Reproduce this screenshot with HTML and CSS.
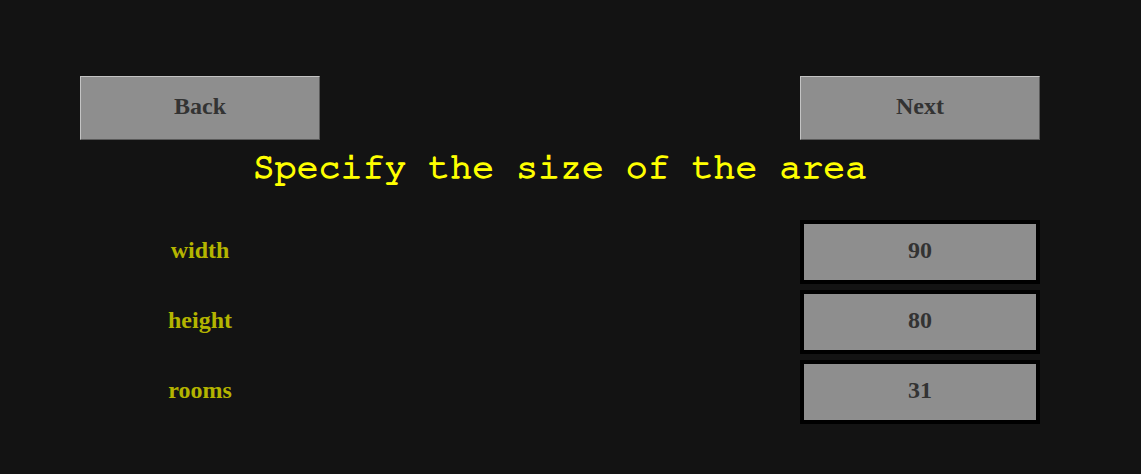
FILE: index.html
```html
<!DOCTYPE html>
<html>
<head>
<meta charset="utf-8">
<link rel="stylesheet" href="styles.css">
</head>
<body>
<div class="page">
  <div class="nav">
    <button class="btn">Back</button>
    <button class="btn">Next</button>
  </div>
  <h1 class="title">Specify the size of the area</h1>
  <div class="fields">
    <div class="row">
      <span class="label">width</span>
      <div class="value">90</div>
    </div>
    <div class="row">
      <span class="label">height</span>
      <div class="value">80</div>
    </div>
    <div class="row">
      <span class="label">rooms</span>
      <div class="value">31</div>
    </div>
  </div>
</div>
</body>
</html>
```

FILE: styles.css
```css
html, body {
  margin: 0;
  padding: 0;
  background: #131313;
}
.page {
  width: 960px;
  padding: 76px 0 0 80px;
}
.nav {
  display: flex;
  justify-content: space-between;
}
.btn {
  width: 240px;
  height: 64px;
  box-sizing: border-box;
  background: #8e8e8e;
  border: 1px solid;
  border-color: #c4c4c4 #5a5a5a #5a5a5a #c4c4c4;
  font-family: "Liberation Serif", serif;
  font-weight: bold;
  font-size: 24px;
  line-height: 24px;
  color: #333333;
  padding: 0 0 4px 0;
}
.title {
  margin: 0;
  height: 80px;
  box-sizing: border-box;
  padding-top: 9px;
  text-align: center;
  font-family: "Nimbus Mono PS", "Nimbus Mono L", "FreeMono", "Courier", "Liberation Mono", monospace;
  font-weight: normal;
  font-size: 36.6px;
  line-height: 36px;
  color: #ffff00;
  -webkit-text-stroke: 1.3px #ffff00;
}
.fields {
  display: flex;
  flex-direction: column;
  gap: 6px;
}
.row {
  display: flex;
  justify-content: space-between;
  align-items: center;
  height: 64px;
}
.label {
  width: 240px;
  text-align: center;
  font-family: "Liberation Serif", serif;
  font-weight: bold;
  font-size: 24px;
  line-height: 24px;
  padding-bottom: 4px;
  color: #b4b400;
}
.value {
  width: 240px;
  height: 64px;
  box-sizing: border-box;
  border: 4px solid #000000;
  background: #8e8e8e;
  display: flex;
  align-items: center;
  justify-content: center;
  padding-bottom: 4px;
  font-family: "Liberation Serif", serif;
  font-weight: bold;
  font-size: 24px;
  line-height: 24px;
  color: #333333;
}
```
